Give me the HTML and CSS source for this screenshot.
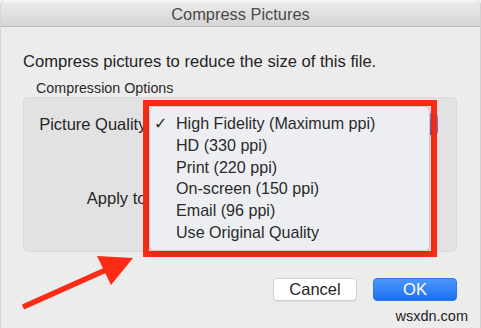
FILE: index.html
```html
<!DOCTYPE html>
<html lang="en">
<head>
<meta charset="utf-8">
<title>Compress Pictures</title>
<link rel="stylesheet" href="styles.css">
</head>
<body>
<div class="window">
  <div class="titlebar">Compress Pictures</div>
  <div class="content">
    <p class="intro">Compress pictures to reduce the size of this file.</p>
    <div class="group-label">Compression Options</div>
    <div class="group">
      <div class="row row-quality">
        <span class="label">Picture Quality:</span>
        <span class="popup"><span class="popup-arrows"></span></span>
      </div>
      <div class="row row-apply">
        <span class="label">Apply to:</span>
        <span class="radios"></span>
      </div>
    </div>
    <div class="buttons">
      <button class="btn btn-cancel">Cancel</button>
      <button class="btn btn-ok">OK</button>
    </div>
    <div class="watermark">wsxdn.com</div>
  </div>

  <div class="highlight"></div>
  <ul class="menu">
    <li class="checked">High Fidelity (Maximum ppi)</li>
    <li>HD (330 ppi)</li>
    <li>Print (220 ppi)</li>
    <li>On-screen (150 ppi)</li>
    <li>Email (96 ppi)</li>
    <li>Use Original Quality</li>
  </ul>
  <svg class="arrow" width="481" height="328" viewBox="0 0 481 328" aria-hidden="true">
    <line x1="23" y1="307" x2="108" y2="269" stroke="#fb2b16" stroke-width="5.5" stroke-linecap="butt"/>
    <polygon points="97,256 133,258 111,285" fill="#fb2b16"/>
  </svg>
</div>
</body>
</html>
```

FILE: styles.css
```css
* { box-sizing: border-box; }

html, body {
  margin: 0;
  padding: 0;
  width: 481px;
  height: 328px;
  overflow: hidden;
  background: #f2f2f2;
  font-family: "Liberation Sans", Arial, sans-serif;
}

.window {
  position: relative;
  width: 481px;
  height: 328px;
  background: #ececec;
  border-left: 1px solid #d6d6d6;
  border-right: 1px solid #d0d0d0;
  border-radius: 5px 5px 0 0;
  display: flex;
  flex-direction: column;
  overflow: hidden;
}

.titlebar {
  height: 27px;
  flex: none;
  display: flex;
  align-items: center;
  justify-content: center;
  font-size: 16.4px;
  color: #4a4a4a;
  background: linear-gradient(#ebebeb, #d5d5d5);
  border-top: 2px solid #f3f3f3;
  border-bottom: 1px solid #b9b9b9;
  padding-top: 0;
}

.content {
  flex: 1;
  display: flex;
  flex-direction: column;
  padding: 25px 23px 0 22px;
}

.intro {
  margin: 0;
  font-size: 16.6px;
  line-height: 19px;
  color: #242424;
}

.group-label {
  margin: 9px 0 0 13px;
  font-size: 14.3px;
  line-height: 17px;
  color: #2a2a2a;
}

.group {
  margin-top: 0;
  height: 155px;
  background: #e2e2e2;
  border: 1px solid #dadada;
  border-radius: 5px;
  display: flex;
  flex-direction: column;
  padding-top: 14px;
}

.row {
  display: grid;
  grid-template-columns: 127px 1fr;
  column-gap: 5px;
  align-items: center;
  height: 24px;
}

.row-apply {
  margin-top: 50px;
}

.label {
  font-size: 16.5px;
  color: #262626;
  text-align: right;
  white-space: nowrap;
}

.popup {
  display: block;
  height: 22px;
  margin-right: 18px;
  background: #fff;
  border-radius: 4px;
  position: relative;
}

.popup-arrows {
  position: absolute;
  right: 0;
  top: 0;
  width: 16px;
  height: 22px;
  border-radius: 0 4px 4px 0;
  background: linear-gradient(#6e93f0, #3f66dc);
}

.buttons {
  margin-top: 26px;
  display: flex;
  justify-content: flex-end;
  gap: 16px;
  padding-right: 0;
}

.btn {
  width: 84px;
  height: 23px;
  border-radius: 4px;
  font-family: "Liberation Sans", Arial, sans-serif;
  font-size: 16.5px;
  padding: 0;
  line-height: 21px;
}

.btn-cancel {
  background: #ffffff;
  color: #262626;
  border: 1px solid #d0d0d0;
  box-shadow: 0 1px 0 rgba(0,0,0,0.06);
}

.btn-ok {
  background: linear-gradient(#4d97fa, #1b6ff3);
  color: #ffffff;
  border: 1px solid #2a77ee;
}

.watermark {
  margin-top: 7px;
  margin-right: -11px;
  text-align: right;
  font-size: 14.5px;
  line-height: 16px;
  color: #1e1e1e;
}

.highlight {
  position: absolute;
  left: 142px;
  top: 100px;
  width: 294px;
  height: 157px;
  border: 6px solid #fb2b16;
}

.menu {
  position: absolute;
  left: 148px;
  top: 106px;
  width: 281px;
  height: 145px;
  margin: 0;
  padding: 6px 0 0 0;
  list-style: none;
  background: #eceef1;
  border: 1px solid #c9cacd;
  border-radius: 5px;
  box-shadow: 0 2px 6px rgba(0,0,0,0.15);
}

.menu li {
  position: relative;
  padding-left: 26px;
  font-size: 16.1px;
  line-height: 21.8px;
  color: #2a2a2a;
  white-space: nowrap;
}

.menu li.checked::before {
  content: "\2713";
  position: absolute;
  left: 4px;
  top: 0;
  font-family: "DejaVu Sans", sans-serif;
  font-size: 16px;
  font-weight: bold;
}

.arrow {
  position: absolute;
  left: -1px;
  top: 0;
  pointer-events: none;
}
```
